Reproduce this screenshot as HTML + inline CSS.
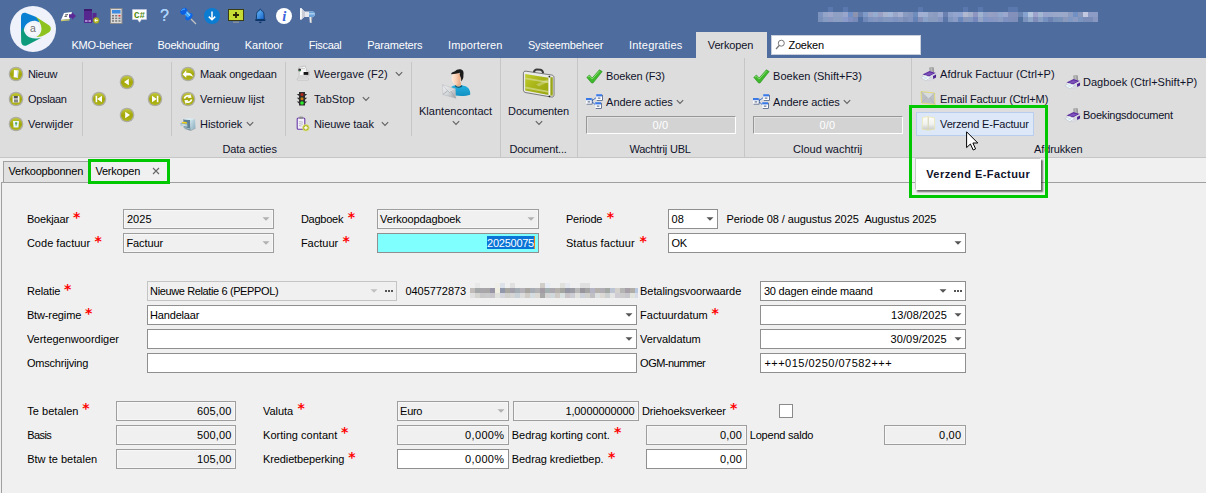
<!DOCTYPE html>
<html lang="nl"><head><meta charset="utf-8"><title>Verkopen</title>
<style>
html,body{margin:0;padding:0}
body{width:1206px;height:493px;overflow:hidden;position:relative;background:#f0f0f0;font-family:"Liberation Sans",sans-serif;font-size:11px;color:#000}
body *{position:absolute;box-sizing:border-box}
.t{white-space:nowrap;line-height:14px;height:14px;font-size:11px}
.m{color:#fff;font-size:11px}
.r{color:#10122a}
.g{color:#10122a}
.b{font-weight:bold}
.w{color:#fff}
.ast{color:#ff0000;font-family:"DejaVu Sans",sans-serif;font-size:14px;font-weight:bold;line-height:20px;height:20px}
.bx{border:1px solid #8f8f8f;background:#fff}
.bd{border:1px solid #9e9e9e;background:#f0f0f0;box-shadow:inset 0 0 0 1px #f7f7f7}
.bl{border:1px solid #c4c4c4;background:#f0f0f0}
.sep{width:1px;background:#c6c6c6}
svg{overflow:visible}

</style></head>
<body>
<div style="left:0;top:0;width:1206px;height:58px;background:#4e6c9e"></div>
<svg style="left:9px;top:5px" width="48" height="48" viewBox="0 0 48 48">
<circle cx="24" cy="24" r="23" fill="#eff2fa"/>
<path d="M12 12 C12 8.6 14.5 7 17.6 8.2 L26 11.6 C28.6 12.9 30.2 15 30.4 17.4 C27.6 15.4 24.4 15.2 21.4 16.4 C17.6 18 15.4 21 15 24.2 C14.2 25.4 13 26.6 12 27.2 Z" fill="#0a80d2"/>
<path d="M26.4 11.4 L39.6 20 C42.6 22 42.6 25.6 39.6 27.5 L36 29.7 C33 31.3 30 32.1 27.3 31.9 C30.6 30.1 32.7 27 32.5 23.4 C32.3 19 29.9 15 26.4 11.4Z" fill="#8dc21f"/>
<path d="M14.6 22.2 C14.3 26 16.4 30.6 21 32.5 C25 33.9 29.6 33.5 32.8 32.4 L18 40.2 C15 41.6 12.4 40.1 12.2 37 L12 27.6 C12.4 25.6 13.4 23.4 14.6 22.2Z" fill="#0d9b7c"/>
<circle cx="23.8" cy="24" r="6.3" fill="#f7f8fc"/>
<text x="23.8" y="27.2" style="font-family:'Liberation Sans',sans-serif;font-size:10.5px" text-anchor="middle" fill="#707070">a</text>
</svg>
<svg style="left:60px;top:8px" width="18" height="16" viewBox="0 0 18 16">
<path d="M4 5 L12 4 L9.5 11 L1 12 Z" fill="#fff"/><path d="M1 12 L9.5 11 L9.5 12.5 L1 13.2Z" fill="#c9c96a"/>
<path d="M5 7 l3 -.4 M4.5 8.5 l2.5 -.3" stroke="#555" stroke-width="1"/>
<path d="M9 6.2 h3 v-2 l4 3.8 l-4 3.8 v-2 h-3 z" fill="#5b2a96"/></svg>
<svg style="left:83px;top:8px" width="18" height="16" viewBox="0 0 18 16">
<rect x="1" y="1" width="8" height="14" fill="#56278f"/><rect x="1" y="1" width="8" height="2" fill="#3d1a70"/>
<rect x="9.5" y="5" width="4" height="9" fill="#56278f"/><rect x="2" y="12" width="2.5" height="2" fill="#a98bd0"/><rect x="5.5" y="12" width="2.5" height="2" fill="#a98bd0"/>
<circle cx="13.2" cy="12.4" r="2.9" fill="#b9bd28" stroke="#8c8f20" stroke-width=".6"/><path d="M14.8 12.4 h-2.8 m1.2 -1.3 l-1.4 1.3 l1.4 1.3" stroke="#fff" stroke-width="1" fill="none"/></svg>
<svg style="left:110px;top:8px" width="13" height="16" viewBox="0 0 13 16">
<rect x=".5" y=".5" width="11.5" height="15" fill="#d9d9d9" stroke="#8b8b8b"/>
<rect x="2" y="2" width="8.5" height="3.5" fill="#3c8be0"/>
<g fill="#777"><rect x="2" y="7" width="2" height="1.5"/><rect x="5.2" y="7" width="2" height="1.5"/><rect x="2" y="9.6" width="2" height="1.5"/><rect x="5.2" y="9.6" width="2" height="1.5"/><rect x="8.5" y="9.6" width="2" height="1.5"/><rect x="2" y="12.2" width="2" height="1.5"/><rect x="5.2" y="12.2" width="2" height="1.5"/><rect x="8.5" y="12.2" width="2" height="1.5"/></g>
<rect x="8.5" y="7" width="2" height="1.5" fill="#e03030"/></svg>
<svg style="left:132px;top:9px" width="15" height="14" viewBox="0 0 15 14">
<path d="M.5 .5 h14 v10 h-5 l-2 2.8 l-2 -2.8 h-5z" fill="#fff" stroke="#c5cde0" stroke-width=".6"/>
<text x="7.5" y="8.6" font-size="8.5" font-weight="bold" text-anchor="middle" fill="#4f8a10" font-family="Liberation Mono, monospace" textLength="11" lengthAdjust="spacingAndGlyphs">C#</text></svg>
<span class="t" style="left:160px;top:6.5px;font-size:16px;line-height:18px;height:18px;color:#a6d2ff;text-shadow:0 0 .6px #e8f6ff">?</span>
<svg style="left:180px;top:8px" width="17" height="16" viewBox="0 0 17 16">
<path d="M11 11 L16 16" stroke="#c4c4c4" stroke-width="1.3"/>
<ellipse cx="9" cy="8.8" rx="4.3" ry="2.5" transform="rotate(-45 9 8.8)" fill="#0a66e6"/>
<path d="M3.6 5.4 L6.6 2.4 L11 6.8 L8 9.8Z" fill="#3aa6ff"/>
<ellipse cx="3.8" cy="3.2" rx="3.8" ry="2.9" transform="rotate(-40 3.8 3.2)" fill="#0b5fe0"/>
<path d="M1.6 2.6 C2.4 1.4 3.8 .9 5 1.2" stroke="#58b8ff" stroke-width="1" fill="none"/>
<path d="M6.4 4 L10 7.6" stroke="#bfe6ff" stroke-width="1"/></svg>
<svg style="left:204px;top:8px" width="16" height="16" viewBox="0 0 16 16">
<circle cx="8" cy="8" r="8" fill="#0a7dd2"/><path d="M8 3.5 v8 M4.8 8.6 L8 11.8 L11.2 8.6" stroke="#fff" stroke-width="1.5" fill="none"/></svg>
<svg style="left:228px;top:9px" width="16" height="14" viewBox="0 0 16 14">
<rect x=".5" y=".5" width="15" height="11" fill="#c6dc34" stroke="#3c3c12"/>
<path d="M8 3 v6 M5 6 h6" stroke="#2a2204" stroke-width="1.8"/><rect x="5" y="12.6" width="6" height="1.1" fill="#9a9a9a"/></svg>
<svg style="left:254px;top:8px" width="13" height="16" viewBox="0 0 13 16">
<defs><linearGradient id="bg" x1="0" y1="0" x2="1" y2="1"><stop offset="0" stop-color="#6cc0f8"/><stop offset="1" stop-color="#1662cc"/></linearGradient></defs>
<path d="M6.3 1.1 C7 1.1 7.2 1.9 7.3 2.5 C9.2 3 10 4.8 10 6.6 L10.3 11.4 H2.3 L2.6 6.6 C2.6 4.8 3.4 3 5.3 2.5 C5.4 1.9 5.6 1.1 6.3 1.1Z" fill="url(#bg)" stroke="#0b3568" stroke-width=".9"/>
<path d="M.8 11.4 H11.8 L11 12.9 H1.6Z" fill="#0b3568"/><path d="M4.8 13.7 H7.8 C7.6 15.6 5 15.6 4.8 13.7Z" fill="#0b3568"/></svg>
<svg style="left:276px;top:8px" width="16" height="16" viewBox="0 0 16 16">
<circle cx="8" cy="8" r="8" fill="#fff"/><text x="8.3" y="12.8" font-size="14.5" font-style="italic" font-weight="bold" text-anchor="middle" fill="#3b62da" font-family="Liberation Serif, serif">i</text></svg>
<svg style="left:300px;top:8px" width="16" height="16" viewBox="0 0 16 16">
<path d="M.2 .3 L1.4 .3 L5 4 V8.3 L1.4 11.6 H.2Z" fill="#f4f5f7"/><path d="M1.4 .3 L5 4 V8.3 L1.4 11.6Z" fill="#c9ced6"/><path d="M.2 .3 H1.6 V11.6 H.2Z" fill="#fff"/>
<path d="M5 3.6 H12.6 C14.2 3.8 14.8 5 14.8 6.2 C14.8 7.4 14.2 8.6 12.6 8.9 H5Z" fill="#e4e8ee"/>
<path d="M9 3.6 H12.6 C14.2 3.8 14.8 5 14.8 6.2 C14.8 7.4 14.2 8.6 12.6 8.9 H9Z" fill="#6aa4dc"/><path d="M9 5 H14.6 V6.6 H9Z" fill="#a9cbee"/>
<path d="M9.4 8.9 H12.2 L11.8 14.7 H9.8Z" fill="#e9ebee"/><path d="M11 8.9 H12.2 L11.8 14.7 H11Z" fill="#a8adb6"/></svg>
<svg style="left:818px;top:7px" width="280" height="15" viewBox="0 0 280 15" shape-rendering="crispEdges"><rect x="0" y="5" width="5" height="5" fill="#7d93bf"/><rect x="0" y="10" width="5" height="5" fill="#7990ba"/><rect x="5" y="5" width="5" height="5" fill="#93a4c8"/><rect x="5" y="10" width="5" height="5" fill="#859bc2"/><rect x="10" y="5" width="5" height="5" fill="#9ca6cb"/><rect x="10" y="10" width="5" height="5" fill="#8b98c2"/><rect x="10" y="0" width="5" height="5" fill="#5a78ad"/><rect x="15" y="5" width="5" height="5" fill="#909fc4"/><rect x="15" y="10" width="5" height="5" fill="#8c9ec2"/><rect x="20" y="5" width="5" height="5" fill="#909fc4"/><rect x="20" y="10" width="5" height="5" fill="#8c9ec2"/><rect x="25" y="5" width="5" height="5" fill="#99a5ca"/><rect x="25" y="10" width="5" height="5" fill="#8a9aca"/><rect x="25" y="0" width="5" height="5" fill="#5a78ad"/><rect x="30" y="5" width="5" height="5" fill="#6f8fc6"/><rect x="30" y="10" width="5" height="5" fill="#7f90c0"/><rect x="35" y="5" width="5" height="5" fill="#8b93ae"/><rect x="35" y="10" width="5" height="5" fill="#788bb8"/><rect x="40" y="5" width="5" height="5" fill="#6a82b2"/><rect x="40" y="10" width="5" height="5" fill="#4f6ea4"/><rect x="45" y="5" width="5" height="5" fill="#7f9ac6"/><rect x="45" y="10" width="5" height="5" fill="#6f88b8"/><rect x="50" y="5" width="5" height="5" fill="#98a3c6"/><rect x="50" y="10" width="5" height="5" fill="#7d93c0"/><rect x="55" y="5" width="5" height="5" fill="#93accf"/><rect x="55" y="10" width="5" height="5" fill="#8496c0"/><rect x="60" y="5" width="5" height="5" fill="#9aa0c4"/><rect x="60" y="10" width="5" height="5" fill="#7d93be"/><rect x="65" y="5" width="5" height="5" fill="#a6b2ce"/><rect x="65" y="10" width="5" height="5" fill="#8398be"/><rect x="70" y="5" width="5" height="5" fill="#a3b6d8"/><rect x="70" y="10" width="5" height="5" fill="#8497c2"/><rect x="75" y="5" width="5" height="5" fill="#9aa6c8"/><rect x="75" y="10" width="5" height="5" fill="#7f93c0"/><rect x="80" y="5" width="5" height="5" fill="#a6b0d0"/><rect x="80" y="10" width="5" height="5" fill="#8496be"/><rect x="85" y="5" width="5" height="5" fill="#8a9bc2"/><rect x="85" y="10" width="5" height="5" fill="#7a8eb8"/><rect x="90" y="5" width="5" height="5" fill="#8496be"/><rect x="90" y="10" width="5" height="5" fill="#8093be"/><rect x="95" y="5" width="5" height="5" fill="#6e8cbc"/><rect x="95" y="10" width="5" height="5" fill="#6482b6"/><rect x="100" y="5" width="5" height="5" fill="#a3afd2"/><rect x="100" y="10" width="5" height="5" fill="#8590b8"/><rect x="100" y="0" width="5" height="5" fill="#5a78ad"/><rect x="105" y="5" width="5" height="5" fill="#9fb0d2"/><rect x="105" y="10" width="5" height="5" fill="#8aa2c8"/><rect x="110" y="5" width="5" height="5" fill="#8f9fc4"/><rect x="110" y="10" width="5" height="5" fill="#8a9bc0"/><rect x="115" y="5" width="5" height="5" fill="#8c9cc0"/><rect x="115" y="10" width="5" height="5" fill="#8a9bc0"/><rect x="120" y="5" width="5" height="5" fill="#96a6cc"/><rect x="120" y="10" width="5" height="5" fill="#8494c0"/><rect x="125" y="5" width="5" height="5" fill="#6a80b0"/><rect x="125" y="10" width="5" height="5" fill="#5a76a8"/><rect x="130" y="5" width="5" height="5" fill="#8c9fc8"/><rect x="130" y="10" width="5" height="5" fill="#7f96c0"/><rect x="135" y="5" width="5" height="5" fill="#93a5cc"/><rect x="135" y="10" width="5" height="5" fill="#8a9cc6"/><rect x="140" y="5" width="5" height="5" fill="#8fa4d0"/><rect x="140" y="10" width="5" height="5" fill="#6a88bc"/><rect x="145" y="5" width="5" height="5" fill="#b0b8d0"/><rect x="145" y="10" width="5" height="5" fill="#8797bc"/><rect x="145" y="0" width="5" height="5" fill="#5a78ad"/><rect x="150" y="5" width="5" height="5" fill="#a3aecb"/><rect x="150" y="10" width="5" height="5" fill="#8398c0"/><rect x="155" y="5" width="5" height="5" fill="#8d95c0"/><rect x="155" y="10" width="5" height="5" fill="#7486bc"/><rect x="160" y="5" width="5" height="5" fill="#9fb3d0"/><rect x="160" y="10" width="5" height="5" fill="#93a4c4"/><rect x="160" y="0" width="5" height="5" fill="#5a78ad"/><rect x="165" y="5" width="5" height="5" fill="#8e9fc8"/><rect x="165" y="10" width="5" height="5" fill="#7f96c6"/><rect x="170" y="5" width="5" height="5" fill="#969fc4"/><rect x="170" y="10" width="5" height="5" fill="#8595c4"/><rect x="175" y="5" width="5" height="5" fill="#929ec4"/><rect x="175" y="10" width="5" height="5" fill="#8797c2"/><rect x="180" y="5" width="5" height="5" fill="#90a6cc"/><rect x="180" y="10" width="5" height="5" fill="#8a9cc2"/><rect x="185" y="5" width="5" height="5" fill="#9ba7cc"/><rect x="185" y="10" width="5" height="5" fill="#7d90c0"/><rect x="190" y="5" width="5" height="5" fill="#8390bc"/><rect x="190" y="10" width="5" height="5" fill="#7d8fba"/><rect x="190" y="0" width="5" height="5" fill="#5a78ad"/><rect x="195" y="5" width="5" height="5" fill="#8391ba"/><rect x="195" y="10" width="5" height="5" fill="#7f8eb8"/><rect x="195" y="0" width="5" height="5" fill="#5a78ad"/><rect x="200" y="5" width="5" height="5" fill="#6c86b4"/><rect x="200" y="10" width="5" height="5" fill="#50709f"/><rect x="205" y="5" width="5" height="5" fill="#86a2cf"/><rect x="205" y="10" width="5" height="5" fill="#7a92bc"/><rect x="210" y="5" width="5" height="5" fill="#b3c6de"/><rect x="210" y="10" width="5" height="5" fill="#8ea6c8"/><rect x="215" y="5" width="5" height="5" fill="#9da2cc"/><rect x="215" y="10" width="5" height="5" fill="#7f8cba"/><rect x="220" y="5" width="5" height="5" fill="#a3b6d2"/><rect x="220" y="10" width="5" height="5" fill="#8a9fc4"/><rect x="225" y="5" width="5" height="5" fill="#98a4cc"/><rect x="225" y="10" width="5" height="5" fill="#7690c0"/><rect x="230" y="5" width="5" height="5" fill="#96a6ca"/><rect x="230" y="10" width="5" height="5" fill="#6c82b2"/><rect x="235" y="5" width="5" height="5" fill="#9ba7c8"/><rect x="235" y="10" width="5" height="5" fill="#7690ba"/><rect x="240" y="5" width="5" height="5" fill="#9aa8ca"/><rect x="240" y="10" width="5" height="5" fill="#7892ba"/><rect x="245" y="5" width="5" height="5" fill="#9ca8c8"/><rect x="245" y="10" width="5" height="5" fill="#8a98bc"/><rect x="250" y="5" width="5" height="5" fill="#8c9bc0"/><rect x="250" y="10" width="5" height="5" fill="#7f98c4"/><rect x="255" y="5" width="5" height="5" fill="#7191c4"/><rect x="255" y="10" width="5" height="5" fill="#8a9ac0"/><rect x="260" y="5" width="5" height="5" fill="#8797bc"/><rect x="260" y="10" width="5" height="5" fill="#7a94c0"/><rect x="265" y="5" width="5" height="5" fill="#c2c8e0"/><rect x="265" y="10" width="5" height="5" fill="#7a8cb8"/><rect x="270" y="5" width="5" height="5" fill="#8c9cc4"/><rect x="270" y="10" width="5" height="5" fill="#7a8cb8"/><rect x="275" y="5" width="5" height="5" fill="#8c9cc4"/><rect x="275" y="10" width="5" height="5" fill="#8797c0"/></svg>
<span class="t m" style="left:71.4px;top:38.3px;letter-spacing:-0.218px;">KMO-beheer</span>
<span class="t m" style="left:157.4px;top:38.3px;letter-spacing:-0.221px;">Boekhouding</span>
<span class="t m" style="left:244.8px;top:38.3px;letter-spacing:-0.062px;">Kantoor</span>
<span class="t m" style="left:308.8px;top:38.3px;letter-spacing:-0.321px;">Fiscaal</span>
<span class="t m" style="left:367.2px;top:38.3px;letter-spacing:-0.166px;">Parameters</span>
<span class="t m" style="left:448.1px;top:38.3px;letter-spacing:0.130px;">Importeren</span>
<span class="t m" style="left:527.9px;top:38.3px;letter-spacing:-0.134px;">Systeembeheer</span>
<span class="t m" style="left:629.1px;top:38.3px;letter-spacing:0.175px;">Integraties</span>
<div style="left:696px;top:32px;width:71px;height:26px;background:#dddddd"></div>
<span class="t r" style="left:707.8px;top:38.3px;letter-spacing:-0.136px;">Verkopen</span>
<div style="left:771px;top:35px;width:150px;height:20px;background:#fff;border:1px solid #c9d0dc"></div>
<svg style="left:775px;top:39px" width="11" height="11" viewBox="0 0 11 11"><circle cx="6.3" cy="4.2" r="3" fill="none" stroke="#777" stroke-width="1"/><path d="M4.2 6.5 L1 10" stroke="#777" stroke-width="1.2"/></svg>
<span class="t" style="left:788.4px;top:38.3px;letter-spacing:-0.217px;">Zoeken</span>
<div style="left:0;top:58px;width:1206px;height:100px;background:#dddddd"></div>
<div style="left:0;top:157px;width:1206px;height:1px;background:#c6c6c6"></div>
<div class="sep" style="left:82px;top:62px;height:74px"></div>
<div class="sep" style="left:171px;top:62px;height:74px"></div>
<div class="sep" style="left:285px;top:62px;height:74px"></div>
<div class="sep" style="left:411px;top:62px;height:74px"></div>
<div class="sep" style="left:500px;top:58px;height:100px"></div>
<div class="sep" style="left:577px;top:58px;height:100px"></div>
<div class="sep" style="left:744px;top:58px;height:100px"></div>
<div class="sep" style="left:911px;top:58px;height:100px"></div>
<svg width="0" height="0" style="left:0;top:0"><defs><linearGradient id="ol" x1="0" y1="0" x2="0" y2="1"><stop offset="0" stop-color="#c2c73a"/><stop offset=".5" stop-color="#a3a707"/><stop offset="1" stop-color="#afb41a"/></linearGradient></defs></svg>
<svg style="left:8px;top:66px" width="16" height="16" viewBox="0 0 16 16"><circle cx="8" cy="8" r="7.3" fill="#adada2"/><circle cx="8" cy="8" r="6" fill="url(#ol)"/><path d="M6 4 L10.4 4.6 L10 11.8 L5.6 11.2Z" fill="#fff"/><path d="M9 4.4 L10.4 4.6 L10 11.8 L8.8 11.6Z" fill="#cfe0ee"/></svg>
<svg style="left:8px;top:91px" width="16" height="16" viewBox="0 0 16 16"><circle cx="8" cy="8" r="7.3" fill="#adada2"/><circle cx="8" cy="8" r="6" fill="url(#ol)"/><path d="M4.6 5 H10.6 L11.4 5.8 V11.4 H4.6Z" fill="#f2f2f2"/><rect x="5.8" y="5" width="4" height="2.4" fill="#555"/><rect x="6" y="8.4" width="4" height="3" fill="#888"/></svg>
<svg style="left:8px;top:116px" width="16" height="16" viewBox="0 0 16 16"><circle cx="8" cy="8" r="7.3" fill="#adada2"/><circle cx="8" cy="8" r="6" fill="url(#ol)"/><path d="M5 5 H11 L10.4 11.6 H5.6Z" fill="#e8f4ff"/><path d="M7 7.2 h2.2 m-1.1 -1 v3.4" stroke="#3aa03a" stroke-width="1"/></svg>
<svg style="left:119px;top:74px" width="16" height="16" viewBox="0 0 16 16"><circle cx="8" cy="8" r="7.3" fill="#adada2"/><circle cx="8" cy="8" r="6" fill="url(#ol)"/><path d="M9.8 4.8 V11.2 L5 8Z" fill="#fff"/></svg>
<svg style="left:119px;top:107px" width="16" height="16" viewBox="0 0 16 16"><circle cx="8" cy="8" r="7.3" fill="#adada2"/><circle cx="8" cy="8" r="6" fill="url(#ol)"/><path d="M6.2 4.8 V11.2 L11 8Z" fill="#fff"/></svg>
<svg style="left:91px;top:91px" width="16" height="16" viewBox="0 0 16 16"><circle cx="8" cy="8" r="7.3" fill="#adada2"/><circle cx="8" cy="8" r="6" fill="url(#ol)"/><rect x="4.6" y="4.8" width="1.6" height="6.4" fill="#fff"/><path d="M11 4.8 V11.2 L6.2 8Z" fill="#fff"/></svg>
<svg style="left:147px;top:91px" width="16" height="16" viewBox="0 0 16 16"><circle cx="8" cy="8" r="7.3" fill="#adada2"/><circle cx="8" cy="8" r="6" fill="url(#ol)"/><rect x="9.8" y="4.8" width="1.6" height="6.4" fill="#fff"/><path d="M5 4.8 V11.2 L9.8 8Z" fill="#fff"/></svg>
<svg style="left:180px;top:66px" width="16" height="16" viewBox="0 0 16 16"><circle cx="8" cy="8" r="7.3" fill="#adada2"/><circle cx="8" cy="8" r="6" fill="url(#ol)"/><g transform="translate(8 8) scale(1.25) translate(-8 -8)"><path d="M3.6 8.4 L6.6 5 V7 C9.5 6.6 11.6 7.8 12 10.4 C10.6 9.2 9 8.9 6.6 9.4 V11Z" fill="#fff"/></g></svg>
<svg style="left:180px;top:91px" width="16" height="16" viewBox="0 0 16 16"><circle cx="8" cy="8" r="7.3" fill="#adada2"/><circle cx="8" cy="8" r="6" fill="url(#ol)"/><g transform="translate(8 8) scale(1.22) translate(-8 -8)"><path d="M4.4 7.6 C4.8 5.4 7.2 4.2 9.2 5 L9.8 3.8 L11 7 L7.8 7.2 L8.5 6.2 C7.2 5.8 6 6.6 5.8 7.8Z M11.6 8.4 C11.2 10.6 8.8 11.8 6.8 11 L6.2 12.2 L5 9 L8.2 8.8 L7.5 9.8 C8.8 10.2 10 9.4 10.2 8.2Z" fill="#fff"/></g></svg>
<span class="t r" style="left:27.9px;top:67.0px;letter-spacing:-0.256px;">Nieuw</span>
<span class="t r" style="left:27.9px;top:92.0px;letter-spacing:-0.312px;">Opslaan</span>
<span class="t r" style="left:27.9px;top:117.0px;letter-spacing:0.006px;">Verwijder</span>
<span class="t r" style="left:200.1px;top:67.0px;letter-spacing:-0.177px;">Maak ongedaan</span>
<span class="t r" style="left:200.1px;top:92.0px;letter-spacing:-0.007px;">Vernieuw lijst</span>
<span class="t r" style="left:200.1px;top:117.0px;letter-spacing:-0.077px;">Historiek</span>
<svg style="left:245.5px;top:120.7px" width="8" height="6" viewBox="0 0 8 6"><path d="M.8 1.2 L4 4.4 L7.2 1.2" fill="none" stroke="#626262" stroke-width="1.1"/></svg>
<svg style="left:180px;top:117px" width="16" height="15" viewBox="0 0 16 15">
<defs><linearGradient id="cf" x1="0" y1="0" x2="1" y2="1"><stop offset="0" stop-color="#d2e8f0"/><stop offset="1" stop-color="#86aabb"/></linearGradient></defs>
<path d="M4.4 12 L10.8 14 L15.9 11.6 L15.5 11Z" fill="#7f8a90" opacity=".6"/>
<path d="M3.3 2.3 L10.1 3 L10.6 13.3 L3.8 11.1Z" fill="#5f8194"/>
<path d="M10.1 3 L15 2.1 L15.5 11.1 L10.6 13.3Z" fill="url(#cf)"/>
<path d="M3.3 2.3 L8.7 1.1 L15 2.1 L10.1 3Z" fill="#d9ecf3"/>
<path d="M4.2 10 L10 11.6 L10 12.6 L4.2 10.8Z" fill="#a9c3cf"/>
<path d="M.1 6.2 L7.2 7.2 L7.5 9.8 L.6 8.9Z" fill="#b4ccd8"/><path d="M.1 6.2 L2.4 5.4 L9 6.2 L7.2 7.2Z" fill="#7294a8"/>
<path d="M1.9 5.3 C3 4.4 5.6 4.6 7 5.4 L7 6.8 L2 6.2Z" fill="#f2d21c"/>
<path d="M2.6 7.6 L5.4 8 L5.4 8.6 L2.6 8.2Z" fill="#e9f2f6"/></svg>
<svg style="left:296px;top:66px" width="14" height="15" viewBox="0 0 14 15">
<path d="M2.4 2.6 C2.4 1.3 3.4 .9 5 .9 H6.8 V.2 H9.6 V1.6 L10.4 2.6 V5.2 H13.2 V9.6 H10.4 V11 C11.8 11.4 12.4 12.4 12.4 14 H1.2 C1.2 12.4 1.8 11.4 3.2 11 V6.2 C2.4 5.6 2.2 4 2.4 2.6Z" fill="#f8f8f8" stroke="#b4b4b4" stroke-width=".7"/>
<path d="M3.4 9 H10.2 V11 C11.4 11.4 12 12.4 12 13.6 H1.6 C1.6 12.4 2.2 11.4 3.4 11Z" fill="#d6d6d6"/>
<circle cx="3.7" cy="4" r="1.4" fill="#2a2a2a"/><circle cx="3.9" cy="4.6" r=".6" fill="#2fb84a"/>
<rect x="7.6" y="6" width="4.8" height="2.9" fill="#161616"/><rect x="5" y="2" width="4" height="1.2" fill="#d0d0d0"/></svg>
<svg style="left:296px;top:91px" width="12" height="16" viewBox="0 0 12 16">
<path d="M0.8 3 H3 V1 H9 V3 H11.2 L9 5 V6.8 H11.2 L9 8.8 V10.6 H11.2 L9 12.6 V14.6 H3 V12.6 L.8 10.6 H3 V8.8 L.8 6.8 H3 V5Z" fill="#2e2e2e"/>
<circle cx="6" cy="3.6" r="1.5" fill="#b8281a"/><circle cx="6" cy="7.8" r="1.5" fill="#c87e10"/><circle cx="6" cy="12" r="1.8" fill="#2cf02c"/></svg>
<svg style="left:296px;top:116px" width="14" height="16" viewBox="0 0 14 16">
<rect x="1.2" y="2" width="7.6" height="11.2" rx="1" fill="#f4f0fa" stroke="#6a3aa8" stroke-width="1.1"/><rect x="3.4" y=".6" width="3.4" height="2.2" fill="#8d8d8d"/>
<path d="M3 5.6 l4 .6 M3 7.6 l4 .6 M3 9.6 l2.6 .4" stroke="#a9a9b4" stroke-width=".8"/>
<circle cx="9.9" cy="11.8" r="3.3" fill="#b4ba20" stroke="#dde29a" stroke-width=".7"/><path d="M9.9 10 v3.6 M8.1 11.8 h3.6" stroke="#fff" stroke-width="1.2"/></svg>
<span class="t r" style="left:313.9px;top:67.0px;letter-spacing:0.050px;">Weergave (F2)</span>
<svg style="left:395.0px;top:70.7px" width="8" height="6" viewBox="0 0 8 6"><path d="M.8 1.2 L4 4.4 L7.2 1.2" fill="none" stroke="#626262" stroke-width="1.1"/></svg>
<span class="t r" style="left:313.9px;top:92.0px;letter-spacing:0.061px;">TabStop</span>
<svg style="left:361.7px;top:95.7px" width="8" height="6" viewBox="0 0 8 6"><path d="M.8 1.2 L4 4.4 L7.2 1.2" fill="none" stroke="#626262" stroke-width="1.1"/></svg>
<span class="t r" style="left:313.9px;top:117.0px;letter-spacing:-0.050px;">Nieuwe taak</span>
<svg style="left:381.0px;top:120.7px" width="8" height="6" viewBox="0 0 8 6"><path d="M.8 1.2 L4 4.4 L7.2 1.2" fill="none" stroke="#626262" stroke-width="1.1"/></svg>
<svg style="left:440px;top:68px" width="32" height="32" viewBox="0 0 32 32">
<defs><linearGradient id="sk" x1="0" y1="0" x2="1" y2="0"><stop offset="0" stop-color="#ffe9da"/><stop offset=".45" stop-color="#fbd3b8"/><stop offset="1" stop-color="#e9a67e"/></linearGradient>
<linearGradient id="sh" x1="0" y1="0" x2="0" y2="1"><stop offset="0" stop-color="#22b0e0"/><stop offset="1" stop-color="#1290c2"/></linearGradient>
<linearGradient id="en" x1="0" y1="0" x2="1" y2="1"><stop offset="0" stop-color="#f4f4f4"/><stop offset=".5" stop-color="#d4d7da"/><stop offset="1" stop-color="#9fa4a9"/></linearGradient></defs>
<path d="M11.2 19 C12.6 17.8 14.4 17.4 15.6 17.2 L21.6 17.2 C24.6 17.6 27.2 18.6 28.6 20.4 C30 22.4 30.4 24.6 30.2 26.8 C26.5 28.2 20 28.4 15.6 27.6Z" fill="url(#sh)"/>
<path d="M15.2 17.6 C16.6 19.6 20.6 19.8 22 17.6" fill="none" stroke="#15475a" stroke-width="1.1"/>
<path d="M16 14 H21 V17.4 C19.6 19 17 18.8 15.8 17.4Z" fill="#eab08a"/>
<ellipse cx="16.2" cy="10.4" rx="4.5" ry="6.4" fill="url(#sk)"/>
<path d="M11 6.2 C11.4 4.4 13.4 3.6 15 3.2 C16.4 1.4 19.4 .6 21.2 1.6 C23.4 2.4 24 4.6 23.4 7 C23.6 9 23.2 10.6 22.4 11.8 L21.2 13.4 C21.4 11.4 21 9.6 20.2 8.2 C19.6 7 19.6 5.8 20 4.8 C17.6 5.8 14.2 6 11 6.2Z" fill="#1c1c1c"/>
<path d="M2.6 16.8 L15.3 20.7 L15.7 30.3 L2.9 26.5Z" fill="url(#en)" stroke="#b4b8bc" stroke-width=".5"/>
<path d="M2.6 16.8 L9.4 24.4 L15.3 20.7 M2.9 26.5 L7.8 22.6 M15.7 30.3 L11 23.4" stroke="#9da2a7" stroke-width=".7" fill="none"/>
<path d="M3.2 17.4 L9.4 23.6 L14.8 21" fill="none" stroke="#fff" stroke-width=".6" opacity=".8"/></svg>
<span class="t r" style="left:418.9px;top:104.2px;letter-spacing:0.037px;">Klantencontact</span>
<svg style="left:451.8px;top:120.0px" width="8" height="6" viewBox="0 0 8 6"><path d="M.8 1.2 L4 4.4 L7.2 1.2" fill="none" stroke="#626262" stroke-width="1.1"/></svg>
<svg style="left:522px;top:67px" width="34" height="32" viewBox="0 0 34 32">
<defs><linearGradient id="bc" x1="0" y1="0" x2="1" y2="1"><stop offset="0" stop-color="#c3cf2e"/><stop offset=".45" stop-color="#a9b518"/><stop offset="1" stop-color="#9aa512"/></linearGradient></defs>
<path d="M11.8 5.4 C12.4 3.2 13.4 2.4 15 2.5 L18.6 2.8 C20.2 3 20.8 4.4 21.2 6.4" fill="none" stroke="#3c3c3c" stroke-width="2"/>
<path d="M1.4 6.2 C1.4 4.6 2.4 4 4 4.2 L29.6 8 C31.4 8.4 32 9.2 32 10.6 V27.6 C32 29.6 30.8 30.4 29.2 30 L3.8 25.6 C2.2 25.2 1.4 24.4 1.4 22.8Z" fill="#e9eaea" stroke="#4a4a4a" stroke-width=".7"/>
<path d="M3.2 7 L26.6 10.8 V28 L3.2 23.6Z" fill="url(#bc)"/>
<path d="M3.2 10.4 L26.6 14.4 V16.2 L3.2 12.2Z M3.2 19.6 L26.6 24 V25.8 L3.2 21.4Z" fill="#d3d98a" opacity=".75"/>
<path d="M14 17.6 L24.6 12.6 L26.6 13 V14.6 L17 19.4Z" fill="#fff" opacity=".28"/>
<path d="M28.2 10.2 L30.8 10.2 V28.6 L28.2 28.6Z" fill="#9ba616"/>
<path d="M26.6 10.8 L28.2 10.2 V28.6 L26.6 28Z" fill="#fafafa"/>
<circle cx="27.4" cy="9.6" r=".9" fill="#222"/><circle cx="27.4" cy="29.3" r=".9" fill="#222"/></svg>
<span class="t r" style="left:508.1px;top:104.2px;letter-spacing:-0.157px;">Documenten</span>
<svg style="left:534.8px;top:120.0px" width="8" height="6" viewBox="0 0 8 6"><path d="M.8 1.2 L4 4.4 L7.2 1.2" fill="none" stroke="#626262" stroke-width="1.1"/></svg>
<svg style="left:586px;top:69px" width="17" height="15" viewBox="0 0 17 15"><path d="M.8 8.4 L3.4 6 L6.2 9 L13.4 .8 L16.2 2.6 L7 14 H5.6Z" fill="#3fb82c" stroke="#2a8f1e" stroke-width=".6"/><path d="M2 8.2 L3.4 7 L6.2 10 L13.6 1.8" stroke="#9be884" stroke-width=".8" fill="none"/></svg>
<span class="t r" style="left:606.1px;top:69.0px;letter-spacing:-0.176px;">Boeken (F3)</span>
<svg style="left:586px;top:94px" width="17" height="16" viewBox="0 0 17 16"><path d="M5.6 7 L10.2 3.6 M5.6 7.4 L9.2 10.6" stroke="#3a70d0" stroke-width="1" fill="none"/><rect x="0.6" y="4.6" width="5.8" height="5.8" fill="#1d3766"/><rect x="0" y="4" width="5.8" height="5.8" fill="#fdfdff"/><rect x="0" y="4" width="5.8" height="2.2" fill="#3b7ae4"/><rect x="1.6" y="7.4" width="2.6" height="1" fill="#4a5a78"/><rect x="10.799999999999999" y="0.8" width="5.8" height="5.8" fill="#1d3766"/><rect x="10.2" y="0.2" width="5.8" height="5.8" fill="#fdfdff"/><rect x="10.2" y="0.2" width="5.8" height="2.2" fill="#3b7ae4"/><rect x="11.799999999999999" y="3.6" width="2.6" height="1" fill="#4a5a78"/><rect x="9.799999999999999" y="8.799999999999999" width="5.8" height="5.8" fill="#1d3766"/><rect x="9.2" y="8.2" width="5.8" height="5.8" fill="#fdfdff"/><rect x="9.2" y="8.2" width="5.8" height="2.2" fill="#3b7ae4"/><rect x="10.799999999999999" y="11.6" width="2.6" height="1" fill="#4a5a78"/></svg>
<span class="t r" style="left:606.1px;top:95.0px;letter-spacing:-0.051px;">Andere acties</span>
<svg style="left:675.7px;top:98.7px" width="8" height="6" viewBox="0 0 8 6"><path d="M.8 1.2 L4 4.4 L7.2 1.2" fill="none" stroke="#626262" stroke-width="1.1"/></svg>
<div style="left:586px;top:116px;width:150px;height:18px;background:#d3d3d3;border:1px solid;border-color:#979797 #fff #fff #979797;box-shadow:inset 1px 1px 0 #e2e2e2"></div>
<span class="t w" style="left:652.4px;top:118.3px;letter-spacing:0.168px;">0/0</span>
<svg style="left:753px;top:69px" width="17" height="15" viewBox="0 0 17 15"><path d="M.8 8.4 L3.4 6 L6.2 9 L13.4 .8 L16.2 2.6 L7 14 H5.6Z" fill="#3fb82c" stroke="#2a8f1e" stroke-width=".6"/><path d="M2 8.2 L3.4 7 L6.2 10 L13.6 1.8" stroke="#9be884" stroke-width=".8" fill="none"/></svg>
<span class="t r" style="left:773.1px;top:69.0px;letter-spacing:-0.010px;">Boeken (Shift+F3)</span>
<svg style="left:753px;top:94px" width="17" height="16" viewBox="0 0 17 16"><path d="M5.6 7 L10.2 3.6 M5.6 7.4 L9.2 10.6" stroke="#3a70d0" stroke-width="1" fill="none"/><rect x="0.6" y="4.6" width="5.8" height="5.8" fill="#1d3766"/><rect x="0" y="4" width="5.8" height="5.8" fill="#fdfdff"/><rect x="0" y="4" width="5.8" height="2.2" fill="#3b7ae4"/><rect x="1.6" y="7.4" width="2.6" height="1" fill="#4a5a78"/><rect x="10.799999999999999" y="0.8" width="5.8" height="5.8" fill="#1d3766"/><rect x="10.2" y="0.2" width="5.8" height="5.8" fill="#fdfdff"/><rect x="10.2" y="0.2" width="5.8" height="2.2" fill="#3b7ae4"/><rect x="11.799999999999999" y="3.6" width="2.6" height="1" fill="#4a5a78"/><rect x="9.799999999999999" y="8.799999999999999" width="5.8" height="5.8" fill="#1d3766"/><rect x="9.2" y="8.2" width="5.8" height="5.8" fill="#fdfdff"/><rect x="9.2" y="8.2" width="5.8" height="2.2" fill="#3b7ae4"/><rect x="10.799999999999999" y="11.6" width="2.6" height="1" fill="#4a5a78"/></svg>
<span class="t r" style="left:773.1px;top:95.0px;letter-spacing:-0.051px;">Andere acties</span>
<svg style="left:842.7px;top:98.7px" width="8" height="6" viewBox="0 0 8 6"><path d="M.8 1.2 L4 4.4 L7.2 1.2" fill="none" stroke="#626262" stroke-width="1.1"/></svg>
<div style="left:753px;top:116px;width:150px;height:18px;background:#d3d3d3;border:1px solid;border-color:#979797 #fff #fff #979797;box-shadow:inset 1px 1px 0 #e2e2e2"></div>
<span class="t w" style="left:819.4px;top:118.3px;letter-spacing:0.168px;">0/0</span>
<svg style="left:920px;top:67px" width="17" height="15" viewBox="0 0 17 15">
<path d="M9.4 .4 L13.6 .2 L14 5.6 L9.8 5.8Z" fill="#8c8c8c"/><path d="M10.2 .4 L12.4 .3 L12.8 5 L10.6 5.2Z" fill="#b9b9b9"/>
<path d="M2.6 7.4 L9.6 4 L15.8 6 L16 10.4 L9.6 13.8 L2.4 11Z" fill="#ececf2" stroke="#b8b8c4" stroke-width=".4"/>
<path d="M2.6 7.4 L9.6 4 L15.8 6 L9.2 9.4Z" fill="#5b2a9a"/>
<path d="M4.6 7.4 L9.4 5.2 L13.6 6.4 L9 8.6Z" fill="#7d52bc"/>
<path d="M9.2 9.4 L15.8 6 L16 10.4 L9.6 13.8Z" fill="#d9d9e4"/>
<path d="M13 9 L16 7.4 L16 10.4 L13.2 12Z" fill="#4e2590"/>
<path d="M.8 10.6 L5.6 8.6 L10.6 10.6 L5.8 13.6Z" fill="#fff" stroke="#a9b9c4" stroke-width=".5"/>
<path d="M3 10.8 L5.6 9.8 L8.2 10.8 L5.6 12.2Z" fill="#cfe6ee"/></svg>
<span class="t r" style="left:940.1px;top:67.4px;letter-spacing:0.053px;">Afdruk Factuur (Ctrl+P)</span>
<svg style="left:920px;top:91px" width="16" height="14" viewBox="0 0 16 14">
<path d="M1 .6 L14.6 2 L15 13.6 L1.6 12Z" fill="#bcc0c5" stroke="#e3dc78" stroke-width="1"/><path d="M2 1.6 L8.6 8 L14 2.6Z" fill="#d9dcdf"/><path d="M1 .6 L8.6 8 L14.6 2 M1.6 12 L6.6 6 M15 13.6 L10 6.6" stroke="#aeb2b6" stroke-width=".7" fill="none"/></svg>
<span class="t r" style="left:940.1px;top:91.8px;letter-spacing:-0.129px;">Email Factuur (Ctrl+M)</span>
<div style="left:916px;top:112px;width:118px;height:24px;background:#dce7f8;border:1px solid #b9cdec"></div>
<svg style="left:921px;top:116px" width="15" height="15" viewBox="0 0 15 15">
<defs><linearGradient id="pg" x1="0" y1="0" x2="0" y2="1"><stop offset="0" stop-color="#fdfdfb"/><stop offset=".55" stop-color="#f1f1ee"/><stop offset="1" stop-color="#c4c8c6"/></linearGradient></defs>
<path d="M1.6 1.6 L7.2 .6 V14.2 L1 13.2Z" fill="url(#pg)" stroke="#ece8a6" stroke-width=".7"/><path d="M7.4 .8 L13.4 1.8 L13.8 13.2 L7.4 14.2Z" fill="url(#pg)" stroke="#ece8a6" stroke-width=".7"/>
<path d="M7.3 1 V14" stroke="#c9ccca" stroke-width=".6"/></svg>
<span class="t r" style="left:940.1px;top:117.0px;letter-spacing:-0.183px;">Verzend E-Factuur</span>
<svg style="left:1064px;top:75px" width="17" height="15" viewBox="0 0 17 15">
<path d="M9.4 .4 L13.6 .2 L14 5.6 L9.8 5.8Z" fill="#8c8c8c"/><path d="M10.2 .4 L12.4 .3 L12.8 5 L10.6 5.2Z" fill="#b9b9b9"/>
<path d="M2.6 7.4 L9.6 4 L15.8 6 L16 10.4 L9.6 13.8 L2.4 11Z" fill="#ececf2" stroke="#b8b8c4" stroke-width=".4"/>
<path d="M2.6 7.4 L9.6 4 L15.8 6 L9.2 9.4Z" fill="#5b2a9a"/>
<path d="M4.6 7.4 L9.4 5.2 L13.6 6.4 L9 8.6Z" fill="#7d52bc"/>
<path d="M9.2 9.4 L15.8 6 L16 10.4 L9.6 13.8Z" fill="#d9d9e4"/>
<path d="M13 9 L16 7.4 L16 10.4 L13.2 12Z" fill="#4e2590"/>
<path d="M.8 10.6 L5.6 8.6 L10.6 10.6 L5.8 13.6Z" fill="#fff" stroke="#a9b9c4" stroke-width=".5"/>
<path d="M3 10.8 L5.6 9.8 L8.2 10.8 L5.6 12.2Z" fill="#cfe6ee"/></svg>
<span class="t r" style="left:1083.0px;top:75.4px;letter-spacing:0.022px;">Dagboek (Ctrl+Shift+P)</span>
<svg style="left:1064px;top:108px" width="17" height="15" viewBox="0 0 17 15">
<path d="M9.4 .4 L13.6 .2 L14 5.6 L9.8 5.8Z" fill="#8c8c8c"/><path d="M10.2 .4 L12.4 .3 L12.8 5 L10.6 5.2Z" fill="#b9b9b9"/>
<path d="M2.6 7.4 L9.6 4 L15.8 6 L16 10.4 L9.6 13.8 L2.4 11Z" fill="#ececf2" stroke="#b8b8c4" stroke-width=".4"/>
<path d="M2.6 7.4 L9.6 4 L15.8 6 L9.2 9.4Z" fill="#5b2a9a"/>
<path d="M4.6 7.4 L9.4 5.2 L13.6 6.4 L9 8.6Z" fill="#7d52bc"/>
<path d="M9.2 9.4 L15.8 6 L16 10.4 L9.6 13.8Z" fill="#d9d9e4"/>
<path d="M13 9 L16 7.4 L16 10.4 L13.2 12Z" fill="#4e2590"/>
<path d="M.8 10.6 L5.6 8.6 L10.6 10.6 L5.8 13.6Z" fill="#fff" stroke="#a9b9c4" stroke-width=".5"/>
<path d="M3 10.8 L5.6 9.8 L8.2 10.8 L5.6 12.2Z" fill="#cfe6ee"/></svg>
<span class="t r" style="left:1083.0px;top:108.4px;letter-spacing:-0.235px;">Boekingsdocument</span>
<span class="t g" style="left:222.4px;top:142.4px;letter-spacing:-0.048px;">Data acties</span>
<span class="t g" style="left:509.4px;top:142.4px;letter-spacing:-0.183px;">Document...</span>
<span class="t g" style="left:629.4px;top:142.4px;letter-spacing:-0.207px;">Wachtrij UBL</span>
<span class="t g" style="left:793.1px;top:142.4px;letter-spacing:0.000px;">Cloud wachtrij</span>
<span class="t g" style="left:1034.0px;top:142.2px;letter-spacing:-0.126px;">Afdrukken</span>
<div style="left:1px;top:182px;width:1211px;height:320px;border:1px solid #a0a0a0;background:#f0f0f0"></div>
<div style="left:3px;top:161px;width:86px;height:22px;background:#e1e1e1;border:1px solid #a0a0a0;border-bottom:none"></div>
<div style="left:3px;top:182px;width:86px;height:1px;background:#a0a0a0"></div>
<span class="t" style="left:8.4px;top:164.3px;letter-spacing:-0.175px;">Verkoopbonnen</span>
<div style="left:88px;top:159px;width:82px;height:25px;background:#f0f0f0;border:3px solid #00c800"></div>
<span class="t" style="left:95.4px;top:164.3px;letter-spacing:-0.211px;">Verkopen</span>
<svg style="left:152px;top:167.3px" width="8" height="8" viewBox="0 0 8 8"><path d="M1 1 L7 7 M7 1 L1 7" stroke="#666" stroke-width="1.1"/></svg>
<div style="left:915px;top:158px;width:126px;height:32px;background:#fff;border:1px solid #c8c8c8;border-right-color:#fff;border-bottom-color:#fff;box-shadow:2px 2px 1.5px rgba(0,0,0,.55)"></div>
<span class="t b r" style="left:926.2px;top:166.6px;letter-spacing:0.437px;">Verzend E-Factuur</span>
<div style="left:909px;top:105px;width:139px;height:93px;border:3px solid #00c800"></div>
<svg style="left:966px;top:130.5px" width="13" height="20" viewBox="0 0 13 20"><path d="M.6 .8 V16.6 L4.4 13 L7.2 19 L9.6 17.9 L6.9 12 H11.8Z" fill="#fff" stroke="#000" stroke-width="1" stroke-linejoin="miter"/></svg>
<span class="t" style="left:26.9px;top:212.2px;letter-spacing:-0.178px;">Boekjaar</span>
<span class="ast" style="left:73.0px;top:206.9px">*</span>
<div class="bd" style="left:123px;top:209px;width:151px;height:20px;"></div>
<span class="t" style="left:126.9px;top:212.2px;letter-spacing:0.079px;">2025</span>
<svg style="left:262px;top:217px" width="8" height="4" viewBox="0 0 8 4"><path d="M.5 .3 H7.5 L4 3.8Z" fill="#b0b0b0"/></svg>
<span class="t" style="left:26.9px;top:236.0px;letter-spacing:0.026px;">Code factuur</span>
<span class="ast" style="left:94.5px;top:230.9px">*</span>
<div class="bd" style="left:123px;top:233px;width:151px;height:20px;"></div>
<span class="t" style="left:126.4px;top:236.0px;letter-spacing:-0.071px;">Factuur</span>
<svg style="left:262px;top:241px" width="8" height="4" viewBox="0 0 8 4"><path d="M.5 .3 H7.5 L4 3.8Z" fill="#b0b0b0"/></svg>
<span class="t" style="left:300.9px;top:212.2px;letter-spacing:-0.250px;">Dagboek</span>
<span class="ast" style="left:347.7px;top:206.9px">*</span>
<div class="bd" style="left:377px;top:209px;width:162px;height:20px;"></div>
<span class="t" style="left:380.1px;top:212.2px;letter-spacing:-0.141px;">Verkoopdagboek</span>
<svg style="left:527px;top:217px" width="8" height="4" viewBox="0 0 8 4"><path d="M.5 .3 H7.5 L4 3.8Z" fill="#b0b0b0"/></svg>
<span class="t" style="left:300.9px;top:236.0px;letter-spacing:0.000px;">Factuur</span>
<span class="ast" style="left:342.5px;top:230.9px">*</span>
<div class="bx" style="left:377px;top:233px;width:162px;height:20px;background:#80ffff"></div>
<div style="left:487px;top:236px;width:47.5px;height:13px;background:#0a74d6"></div>
<span class="t w" style="left:487.1px;top:236.0px;letter-spacing:-0.257px;">20250075</span>
<div style="left:534px;top:236px;width:1px;height:13px;background:#e8801a"></div>
<span class="t" style="left:565.9px;top:212.2px;letter-spacing:-0.232px;">Periode</span>
<span class="ast" style="left:606.7px;top:206.9px">*</span>
<div class="bx" style="left:668px;top:209px;width:50px;height:20px;"></div>
<span class="t" style="left:671.4px;top:212.2px;letter-spacing:0.275px;">08</span>
<svg style="left:706px;top:217px" width="8" height="4" viewBox="0 0 8 4"><path d="M.5 .3 H7.5 L4 3.8Z" fill="#555"/></svg>
<span class="t" style="left:726.4px;top:212.2px;letter-spacing:-0.086px;">Periode 08 / augustus 2025</span>
<span class="t" style="left:864.4px;top:212.2px;letter-spacing:-0.122px;">Augustus 2025</span>
<span class="t" style="left:565.9px;top:236.0px;letter-spacing:0.066px;">Status factuur</span>
<span class="ast" style="left:639.5px;top:230.9px">*</span>
<div class="bx" style="left:668px;top:233px;width:298px;height:20px;"></div>
<span class="t" style="left:671.4px;top:236.0px;letter-spacing:-0.303px;">OK</span>
<svg style="left:954px;top:241px" width="8" height="4" viewBox="0 0 8 4"><path d="M.5 .3 H7.5 L4 3.8Z" fill="#555"/></svg>
<span class="t" style="left:26.9px;top:284.0px;letter-spacing:-0.136px;">Relatie</span>
<span class="ast" style="left:64.0px;top:278.5px">*</span>
<div class="bl" style="left:147px;top:281px;width:250px;height:20px;"></div>
<span class="t" style="left:150.1px;top:284.0px;letter-spacing:-0.378px;">Nieuwe Relatie 6 (PEPPOL)</span>
<svg style="left:370px;top:289px" width="8" height="4" viewBox="0 0 8 4"><path d="M.5 .3 H7.5 L4 3.8Z" fill="#c0c0c0"/></svg>
<svg style="left:385px;top:290px" width="8" height="2" viewBox="0 0 8 2"><rect x="0" y="0" width="2" height="2" fill="#555"/><rect x="3" y="0" width="2" height="2" fill="#555"/><rect x="6" y="0" width="2" height="2" fill="#555"/></svg>
<span class="t" style="left:405.4px;top:284.4px;letter-spacing:-0.039px;">0405772873</span>
<span class="t" style="left:26.9px;top:308.0px;letter-spacing:-0.133px;">Btw-regime</span>
<span class="ast" style="left:85.0px;top:302.9px">*</span>
<div class="bx" style="left:147px;top:305px;width:490px;height:20px;"></div>
<span class="t" style="left:150.1px;top:308.0px;letter-spacing:-0.185px;">Handelaar</span>
<svg style="left:625px;top:313px" width="8" height="4" viewBox="0 0 8 4"><path d="M.5 .3 H7.5 L4 3.8Z" fill="#555"/></svg>
<span class="t" style="left:26.9px;top:332.2px;letter-spacing:-0.020px;">Vertegenwoordiger</span>
<div class="bx" style="left:147px;top:329px;width:490px;height:20px;"></div>
<svg style="left:625px;top:337px" width="8" height="4" viewBox="0 0 8 4"><path d="M.5 .3 H7.5 L4 3.8Z" fill="#555"/></svg>
<span class="t" style="left:26.9px;top:356.2px;letter-spacing:-0.190px;">Omschrijving</span>
<div class="bx" style="left:147px;top:353px;width:490px;height:20px;"></div>
<span class="t" style="left:640.1px;top:284.4px;letter-spacing:-0.086px;">Betalingsvoorwaarde</span>
<div class="bx" style="left:760px;top:281px;width:206px;height:20px;"></div>
<span class="t" style="left:763.9px;top:284.4px;letter-spacing:-0.187px;">30 dagen einde maand</span>
<svg style="left:939px;top:289px" width="8" height="4" viewBox="0 0 8 4"><path d="M.5 .3 H7.5 L4 3.8Z" fill="#555"/></svg>
<svg style="left:954px;top:290px" width="8" height="2" viewBox="0 0 8 2"><rect x="0" y="0" width="2" height="2" fill="#555"/><rect x="3" y="0" width="2" height="2" fill="#555"/><rect x="6" y="0" width="2" height="2" fill="#555"/></svg>
<span class="t" style="left:640.1px;top:308.0px;letter-spacing:-0.023px;">Factuurdatum</span>
<span class="ast" style="left:711.5px;top:302.9px">*</span>
<div class="bx" style="left:760px;top:305px;width:206px;height:20px;"></div>
<span class="t" style="left:891.1px;top:308.0px;letter-spacing:0.074px;">13/08/2025</span>
<svg style="left:954px;top:313px" width="8" height="4" viewBox="0 0 8 4"><path d="M.5 .3 H7.5 L4 3.8Z" fill="#555"/></svg>
<span class="t" style="left:640.1px;top:332.2px;letter-spacing:-0.051px;">Vervaldatum</span>
<div class="bx" style="left:760px;top:329px;width:206px;height:20px;"></div>
<span class="t" style="left:890.4px;top:332.2px;letter-spacing:0.144px;">30/09/2025</span>
<svg style="left:954px;top:337px" width="8" height="4" viewBox="0 0 8 4"><path d="M.5 .3 H7.5 L4 3.8Z" fill="#555"/></svg>
<span class="t" style="left:640.1px;top:356.2px;letter-spacing:-0.518px;">OGM-nummer</span>
<div class="bx" style="left:760px;top:353px;width:206px;height:20px;"></div>
<span class="t" style="left:764.4px;top:356.2px;letter-spacing:0.486px;">+++015/0250/07582+++</span>
<svg style="left:470px;top:283px" width="168" height="15" viewBox="0 0 168 15" shape-rendering="crispEdges"><rect x="0" y="5" width="5" height="5" fill="#c0bcba"/><rect x="0" y="10" width="5" height="5" fill="#e0e0e0"/><rect x="5" y="5" width="5" height="5" fill="#a4a8a8"/><rect x="5" y="10" width="5" height="5" fill="#d4d4d0"/><rect x="5" y="0" width="5" height="5" fill="#e8e8e8"/><rect x="10" y="5" width="5" height="5" fill="#a8a6aa"/><rect x="10" y="10" width="5" height="5" fill="#c8c8c8"/><rect x="15" y="5" width="5" height="5" fill="#a8a6a6"/><rect x="15" y="10" width="5" height="5" fill="#c8cacc"/><rect x="20" y="5" width="5" height="5" fill="#9896a6"/><rect x="20" y="10" width="5" height="5" fill="#c8c6ca"/><rect x="25" y="5" width="5" height="5" fill="#f0eee0"/><rect x="25" y="10" width="5" height="5" fill="#e0e0dc"/><rect x="25" y="0" width="5" height="5" fill="#f0eee8"/><rect x="30" y="5" width="5" height="5" fill="#9198ac"/><rect x="30" y="10" width="5" height="5" fill="#d4d4dc"/><rect x="30" y="0" width="5" height="5" fill="#dde2ea"/><rect x="35" y="5" width="5" height="5" fill="#a8a6a0"/><rect x="35" y="10" width="5" height="5" fill="#d0d0cc"/><rect x="40" y="5" width="5" height="5" fill="#a2a0aa"/><rect x="40" y="10" width="5" height="5" fill="#d4d4d4"/><rect x="40" y="0" width="5" height="5" fill="#e0e0e0"/><rect x="45" y="5" width="5" height="5" fill="#a4acb4"/><rect x="45" y="10" width="5" height="5" fill="#c8d0d8"/><rect x="50" y="5" width="5" height="5" fill="#b4b2b8"/><rect x="50" y="10" width="5" height="5" fill="#dcdcdc"/><rect x="55" y="5" width="5" height="5" fill="#a8a4a0"/><rect x="55" y="10" width="5" height="5" fill="#d0ccc8"/><rect x="60" y="5" width="5" height="5" fill="#a8acb4"/><rect x="60" y="10" width="5" height="5" fill="#d4dce0"/><rect x="65" y="5" width="5" height="5" fill="#b2b2b4"/><rect x="65" y="10" width="5" height="5" fill="#dcd8d4"/><rect x="70" y="5" width="5" height="5" fill="#a49ca4"/><rect x="70" y="10" width="5" height="5" fill="#a8a8a8"/><rect x="70" y="0" width="5" height="5" fill="#d0ccc8"/><rect x="75" y="5" width="5" height="5" fill="#a4b0b0"/><rect x="75" y="10" width="5" height="5" fill="#d4d4d4"/><rect x="75" y="0" width="5" height="5" fill="#e8ecf4"/><rect x="80" y="5" width="5" height="5" fill="#aca8b0"/><rect x="80" y="10" width="5" height="5" fill="#d0d8dc"/><rect x="85" y="5" width="5" height="5" fill="#b4b0ac"/><rect x="85" y="10" width="5" height="5" fill="#d0cac6"/><rect x="90" y="5" width="5" height="5" fill="#a4a4a0"/><rect x="90" y="10" width="5" height="5" fill="#d8e0e0"/><rect x="90" y="0" width="5" height="5" fill="#e0e0dc"/><rect x="95" y="5" width="5" height="5" fill="#9496a4"/><rect x="95" y="10" width="5" height="5" fill="#c8c4c8"/><rect x="95" y="0" width="5" height="5" fill="#e6e8f0"/><rect x="100" y="5" width="5" height="5" fill="#9c9ca4"/><rect x="100" y="10" width="5" height="5" fill="#ccccd4"/><rect x="105" y="5" width="5" height="5" fill="#b8b8b8"/><rect x="105" y="10" width="5" height="5" fill="#e0e0dc"/><rect x="110" y="5" width="5" height="5" fill="#98969c"/><rect x="110" y="10" width="5" height="5" fill="#ccd0d8"/><rect x="110" y="0" width="5" height="5" fill="#e0e0e0"/><rect x="115" y="5" width="5" height="5" fill="#a4a4a4"/><rect x="115" y="10" width="5" height="5" fill="#d0d0cc"/><rect x="115" y="0" width="5" height="5" fill="#e0e0e0"/><rect x="120" y="5" width="5" height="5" fill="#b4b4c4"/><rect x="120" y="10" width="5" height="5" fill="#c0c0c4"/><rect x="125" y="5" width="5" height="5" fill="#b4b0ac"/><rect x="125" y="10" width="5" height="5" fill="#dce0e0"/><rect x="130" y="5" width="5" height="5" fill="#b0aeb4"/><rect x="130" y="10" width="5" height="5" fill="#dcd8d4"/><rect x="135" y="5" width="5" height="5" fill="#a4a8a4"/><rect x="135" y="10" width="5" height="5" fill="#ccd0d0"/><rect x="140" y="5" width="5" height="5" fill="#bcc4d4"/><rect x="140" y="10" width="5" height="5" fill="#e4e4e4"/><rect x="145" y="5" width="5" height="5" fill="#d4d0cc"/><rect x="145" y="10" width="5" height="5" fill="#d0ccd4"/><rect x="150" y="5" width="5" height="5" fill="#b4b4b4"/><rect x="150" y="10" width="5" height="5" fill="#cccccc"/><rect x="155" y="5" width="5" height="5" fill="#a8a0a8"/><rect x="155" y="10" width="5" height="5" fill="#c8c8cc"/><rect x="160" y="5" width="5" height="5" fill="#b0aca8"/><rect x="160" y="10" width="5" height="5" fill="#e0e4dc"/><rect x="165" y="5" width="3" height="5" fill="#b8c8e0"/><rect x="165" y="10" width="3" height="5" fill="#d8dce8"/></svg>
<span class="t" style="left:27.2px;top:403.6px;letter-spacing:0.053px;">Te betalen</span>
<span class="ast" style="left:82.3px;top:398.3px">*</span>
<div class="bd" style="left:116px;top:401px;width:120px;height:20px;"></div>
<span class="t" style="left:197.1px;top:403.6px;letter-spacing:0.124px;">605,00</span>
<span class="t" style="left:27.2px;top:427.7px;letter-spacing:-0.581px;">Basis</span>
<div class="bd" style="left:116px;top:425px;width:120px;height:20px;"></div>
<span class="t" style="left:197.1px;top:427.7px;letter-spacing:0.124px;">500,00</span>
<span class="t" style="left:27.2px;top:451.9px;letter-spacing:0.020px;">Btw te betalen</span>
<div class="bd" style="left:116px;top:449px;width:120px;height:20px;"></div>
<span class="t" style="left:197.1px;top:451.9px;letter-spacing:0.124px;">105,00</span>
<span class="t" style="left:263.1px;top:403.6px;letter-spacing:-0.079px;">Valuta</span>
<span class="ast" style="left:297.5px;top:398.3px">*</span>
<div class="bd" style="left:397px;top:401px;width:112px;height:20px;"></div>
<span class="t" style="left:400.1px;top:403.6px;letter-spacing:-0.287px;">Euro</span>
<svg style="left:496.7px;top:409px" width="8" height="4" viewBox="0 0 8 4"><path d="M.5 .3 H7.5 L4 3.8Z" fill="#b0b0b0"/></svg>
<span class="t" style="left:263.1px;top:427.7px;letter-spacing:0.007px;">Korting contant</span>
<span class="ast" style="left:341.0px;top:422.4px">*</span>
<div class="bd" style="left:397px;top:425px;width:112px;height:20px;"></div>
<span class="t" style="left:465.1px;top:427.7px;letter-spacing:0.331px;">0,000%</span>
<span class="t" style="left:263.1px;top:451.9px;letter-spacing:-0.129px;">Kredietbeperking</span>
<span class="ast" style="left:348.2px;top:446.6px">*</span>
<div class="bx" style="left:397px;top:449px;width:112px;height:20px;"></div>
<span class="t" style="left:465.1px;top:451.9px;letter-spacing:0.331px;">0,000%</span>
<div class="bd" style="left:513px;top:401px;width:126px;height:20px;"></div>
<span class="t" style="left:565.4px;top:403.6px;letter-spacing:-0.105px;">1,0000000000</span>
<span class="t" style="left:511.8px;top:427.7px;letter-spacing:-0.028px;">Bedrag korting cont.</span>
<span class="ast" style="left:614.0px;top:422.4px">*</span>
<span class="t" style="left:511.8px;top:451.9px;letter-spacing:-0.075px;">Bedrag kredietbep.</span>
<span class="ast" style="left:608.0px;top:446.6px">*</span>
<span class="t" style="left:641.9px;top:403.6px;letter-spacing:-0.144px;">Driehoeksverkeer</span>
<span class="ast" style="left:730.0px;top:398.3px">*</span>
<div class="bx" style="left:779px;top:404px;width:14px;height:14px;border-color:#8a8a8a"></div>
<div class="bd" style="left:646px;top:425px;width:101px;height:20px;"></div>
<span class="t" style="left:720.0px;top:427.7px;letter-spacing:0.145px;">0,00</span>
<div class="bx" style="left:646px;top:449px;width:101px;height:20px;"></div>
<span class="t" style="left:720.0px;top:451.9px;letter-spacing:0.145px;">0,00</span>
<span class="t" style="left:749.8px;top:427.7px;letter-spacing:-0.222px;">Lopend saldo</span>
<div class="bd" style="left:884px;top:425px;width:82px;height:20px;"></div>
<span class="t" style="left:939.1px;top:427.7px;letter-spacing:0.170px;">0,00</span>
</body></html>
